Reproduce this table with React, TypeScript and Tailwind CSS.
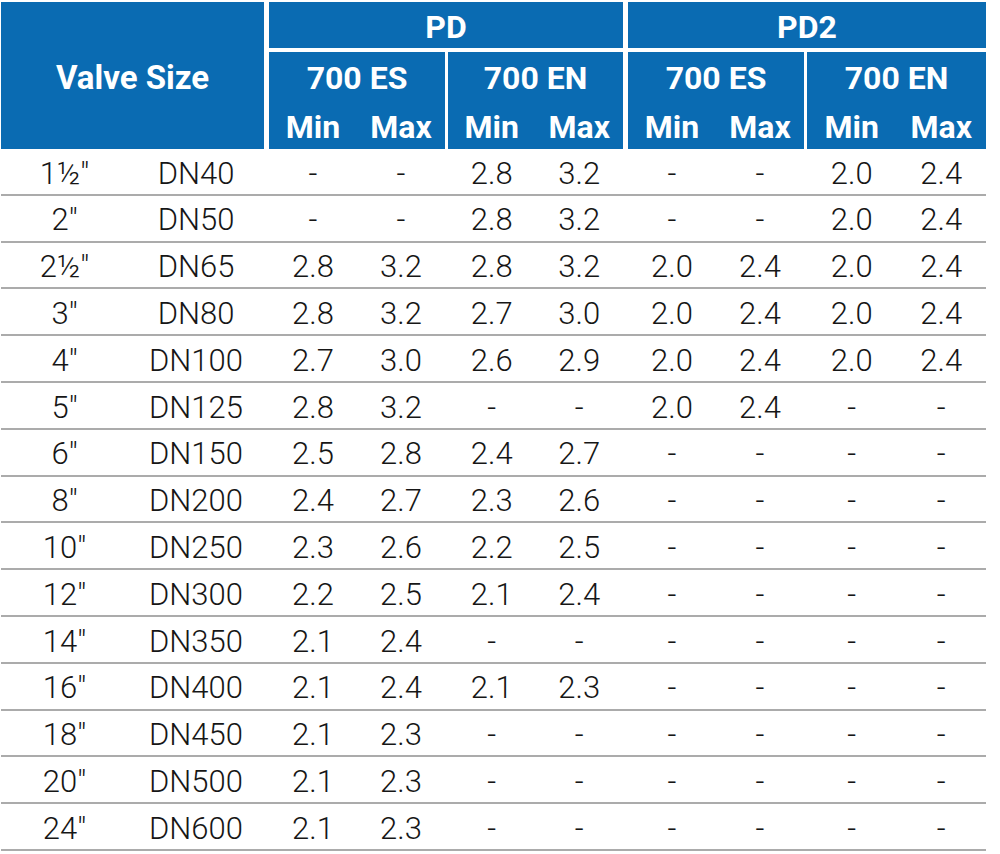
const rows: string[][] = [
  ['1½"', "DN40", "-", "-", "2.8", "3.2", "-", "-", "2.0", "2.4"],
  ['2"', "DN50", "-", "-", "2.8", "3.2", "-", "-", "2.0", "2.4"],
  ['2½"', "DN65", "2.8", "3.2", "2.8", "3.2", "2.0", "2.4", "2.0", "2.4"],
  ['3"', "DN80", "2.8", "3.2", "2.7", "3.0", "2.0", "2.4", "2.0", "2.4"],
  ['4"', "DN100", "2.7", "3.0", "2.6", "2.9", "2.0", "2.4", "2.0", "2.4"],
  ['5"', "DN125", "2.8", "3.2", "-", "-", "2.0", "2.4", "-", "-"],
  ['6"', "DN150", "2.5", "2.8", "2.4", "2.7", "-", "-", "-", "-"],
  ['8"', "DN200", "2.4", "2.7", "2.3", "2.6", "-", "-", "-", "-"],
  ['10"', "DN250", "2.3", "2.6", "2.2", "2.5", "-", "-", "-", "-"],
  ['12"', "DN300", "2.2", "2.5", "2.1", "2.4", "-", "-", "-", "-"],
  ['14"', "DN350", "2.1", "2.4", "-", "-", "-", "-", "-", "-"],
  ['16"', "DN400", "2.1", "2.4", "2.1", "2.3", "-", "-", "-", "-"],
  ['18"', "DN450", "2.1", "2.3", "-", "-", "-", "-", "-", "-"],
  ['20"', "DN500", "2.1", "2.3", "-", "-", "-", "-", "-", "-"],
  ["24″", "DN600", "2.1", "2.3", "-", "-", "-", "-", "-", "-"],
];

// cell widths per column, plus left margin (group gaps)
const cols = [
  "w-[127px]",
  "w-[136px]",
  "w-[88px] ml-[5px]",
  "w-[88px]",
  "w-[87.5px] ml-[3px]",
  "w-[87.5px]",
  "w-[88px] ml-[5px]",
  "w-[88px]",
  "w-[89.5px] ml-[3px]",
  "w-[89.5px]",
];

function SubHead({ label, className }: { label: string; className: string }) {
  return (
    <div className={`bg-[#0a6bb2] flex flex-col pt-[2px] ${className}`}>
      <div className="h-[49px] leading-[49px] text-center">{label}</div>
      <div className="flex h-[49px] leading-[49px]">
        <div className="flex-1 text-center">Min</div>
        <div className="flex-1 text-center">Max</div>
      </div>
    </div>
  );
}

function Group({
  title,
  width,
  enWidth,
}: {
  title: string;
  width: string;
  enWidth: string;
}) {
  return (
    <div className={`ml-[5px] flex flex-col ${width}`}>
      <div className="h-[46px] bg-[#0a6bb2] flex items-center justify-center pt-[4px]">
        {title}
      </div>
      <div className="mt-[4px] flex h-[97px]">
        <SubHead label="700 ES" className="w-[176px]" />
        <SubHead label="700 EN" className={`ml-[3px] ${enWidth}`} />
      </div>
    </div>
  );
}

export default function App() {
  return (
    <div
      className="w-[1000px] h-[854px] bg-white pt-[2px] pl-[1px] overflow-hidden"
      style={{ fontFamily: "Roboto, 'Liberation Sans', sans-serif" }}
    >
      {/* header */}
      <div className="flex h-[147px] text-white font-bold text-[32px]">
        <div className="w-[263px] bg-[#0a6bb2] flex items-center justify-center pt-[4px] text-[33px]">
          Valve Size
        </div>
        <Group title="PD" width="w-[354px]" enWidth="w-[175px]" />
        <Group title="PD2" width="w-[358px]" enWidth="w-[179px]" />
      </div>

      {/* body */}
      <div className="w-[985px] text-[31px] font-light text-[#161616]">
        {rows.map((r, i) => (
          <div
            key={i}
            className="flex h-[46.8px] border-b-2 border-[#ababab] pt-[5px] items-center"
          >
            {r.map((v, j) => (
              <div key={j} className={`${cols[j]} text-center`}>
                {v}
              </div>
            ))}
          </div>
        ))}
      </div>
    </div>
  );
}
